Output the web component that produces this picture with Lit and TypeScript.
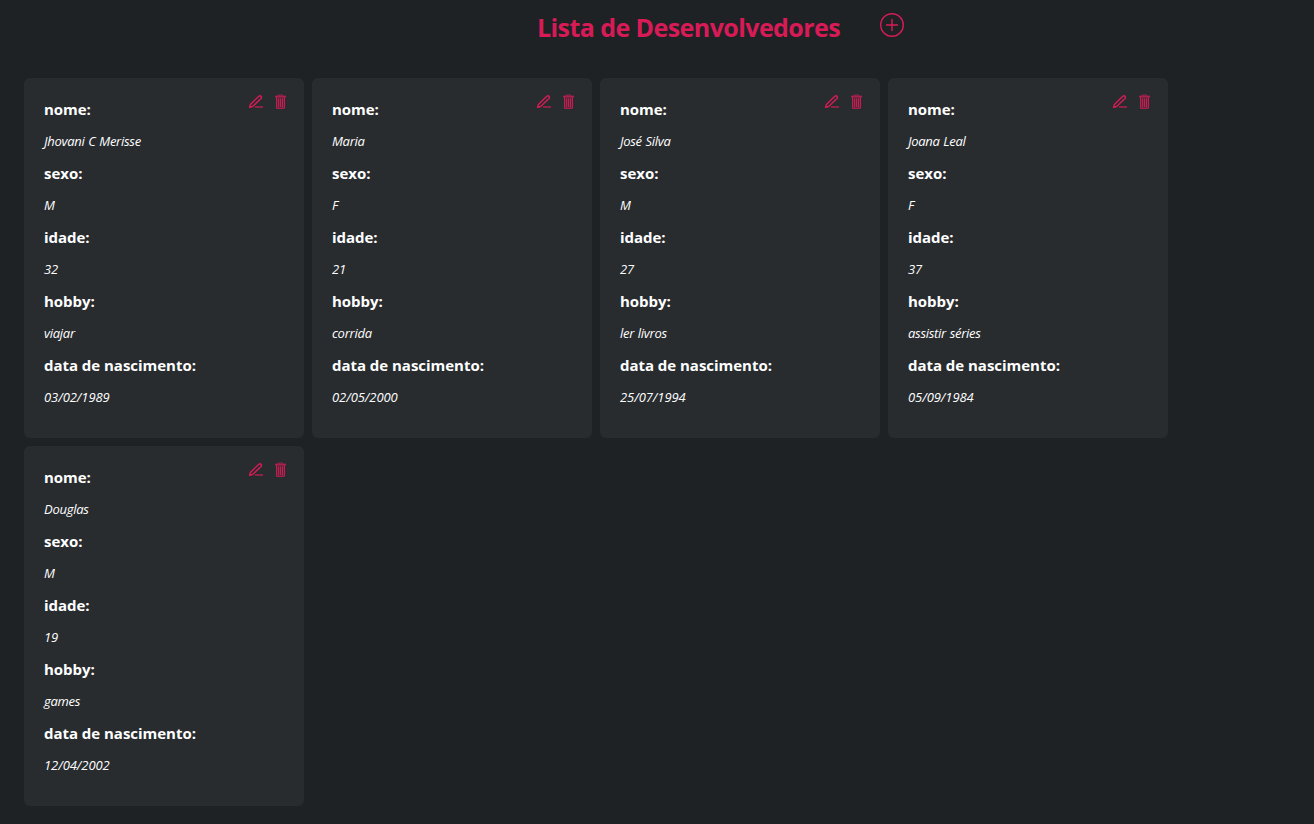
import { LitElement, html, css, svg } from "lit";
import { customElement, property } from "lit/decorators.js";

interface Developer {
  nome: string;
  sexo: string;
  idade: number;
  hobby: string;
  nascimento: string;
}

const developers: Developer[] = [
  { nome: "Jhovani C Merisse", sexo: "M", idade: 32, hobby: "viajar", nascimento: "03/02/1989" },
  { nome: "Maria", sexo: "F", idade: 21, hobby: "corrida", nascimento: "02/05/2000" },
  { nome: "José Silva", sexo: "M", idade: 27, hobby: "ler livros", nascimento: "25/07/1994" },
  { nome: "Joana Leal", sexo: "F", idade: 37, hobby: "assistir séries", nascimento: "05/09/1984" },
  { nome: "Douglas", sexo: "M", idade: 19, hobby: "games", nascimento: "12/04/2002" },
];

const pencil = svg`
  <path d="M1.6 13.3 2.4 10.4 10.8 2.2Q12 1.2 13 2.2 14 3.3 13 4.5L4.6 12.5Z" fill="none" stroke="currentColor" stroke-width="1.4" stroke-linejoin="round"/>
  <path d="M7 13H15" stroke="currentColor" stroke-width="1.8" opacity=".65"/>`;

const trash = svg`
  <path d="M2 2.5H13" stroke="currentColor" stroke-width="1.7" opacity=".75"/>
  <path d="M5.5 2V.9H9.5V2" fill="none" stroke="currentColor" opacity=".6"/>
  <path d="M3 3H12V14.5H3Z" fill="currentColor" fill-opacity=".25"/>
  <path d="M3.5 3V14M11.5 3V14M5.5 4.5V13M7.5 4.5V13M9.5 4.5V13" stroke="currentColor" stroke-width=".9"/>
  <path d="M3.5 14.3H11.5" stroke="currentColor" stroke-width="1.2" opacity=".75"/>`;

@customElement("dev-card")
export class DevCard extends LitElement {
  @property({ attribute: false }) dev!: Developer;

  static styles = css`
    :host {
      display: block;
      box-sizing: border-box;
      width: 280px;
      height: 360px;
      padding: 15px 20px;
      border-radius: 6px;
      background: #282c2f;
      color: #fff;
    }
    .head {
      display: flex;
      justify-content: space-between;
    }
    .actions {
      display: flex;
      gap: 9px;
      margin: 1px -5px 0 0;
    }
    button {
      all: unset;
      width: 16px;
      height: 16px;
      color: #d81b56;
      cursor: pointer;
    }
    svg {
      display: block;
    }
    dl {
      margin: 0;
    }
    dt,
    dd {
      margin: 0;
      line-height: 32px;
      white-space: nowrap;
    }
    dt {
      font-size: 15px;
      font-weight: 700;
      letter-spacing: -0.03px;
    }
    dd {
      font-size: 13px;
      font-style: italic;
      letter-spacing: -0.27px;
      word-spacing: 0.6px;
    }
    .number {
      letter-spacing: -0.07px;
    }
  `;

  render() {
    const d = this.dev;
    return html`
      <div class="head">
        <dl>
          <dt>nome:</dt><dd>${d.nome}</dd>
          <dt>sexo:</dt><dd>${d.sexo}</dd>
          <dt>idade:</dt><dd class="number">${d.idade}</dd>
          <dt>hobby:</dt><dd>${d.hobby}</dd>
          <dt>data de nascimento:</dt><dd class="number">${d.nascimento}</dd>
        </dl>
        <div class="actions">
          <button aria-label="Editar"><svg width="16" height="16" viewBox="0 0 16 16">${pencil}</svg></button>
          <button aria-label="Excluir"><svg width="16" height="16" viewBox="0 0 16 16">${trash}</svg></button>
        </div>
      </div>
    `;
  }
}

@customElement("app-root")
export class AppRoot extends LitElement {
  static styles = css`
    :host {
      display: block;
      box-sizing: border-box;
      min-height: 100vh;
      background: #1e2225;
      font-family: "Open Sans", "Noto Sans", sans-serif;
    }
    header {
      display: flex;
      height: 78px;
      padding-left: 537px;
      box-sizing: border-box;
      color: #d81b56;
    }
    h1 {
      width: 343px;
      margin: 0;
      font-size: 25px;
      line-height: 54px;
      font-weight: 700;
      letter-spacing: -0.57px;
      white-space: nowrap;
    }
    button {
      all: unset;
      width: 24px;
      height: 24px;
      margin-top: 13px;
      cursor: pointer;
    }
    svg {
      display: block;
    }
    main {
      display: flex;
      flex-wrap: wrap;
      gap: 8px;
      padding: 0 24px 18px;
    }
  `;

  render() {
    return html`
      <header>
        <h1>Lista de Desenvolvedores</h1>
        <button aria-label="Adicionar">
          <svg width="24" height="24" viewBox="0 0 24 24" fill="none" stroke="currentColor" stroke-width="1.4">
            <circle cx="12" cy="12" r="11.3" />
            <path d="M12 6V18M6 12H18" />
          </svg>
        </button>
      </header>
      <main>${developers.map((d) => html`<dev-card .dev=${d}></dev-card>`)}</main>
    `;
  }
}
